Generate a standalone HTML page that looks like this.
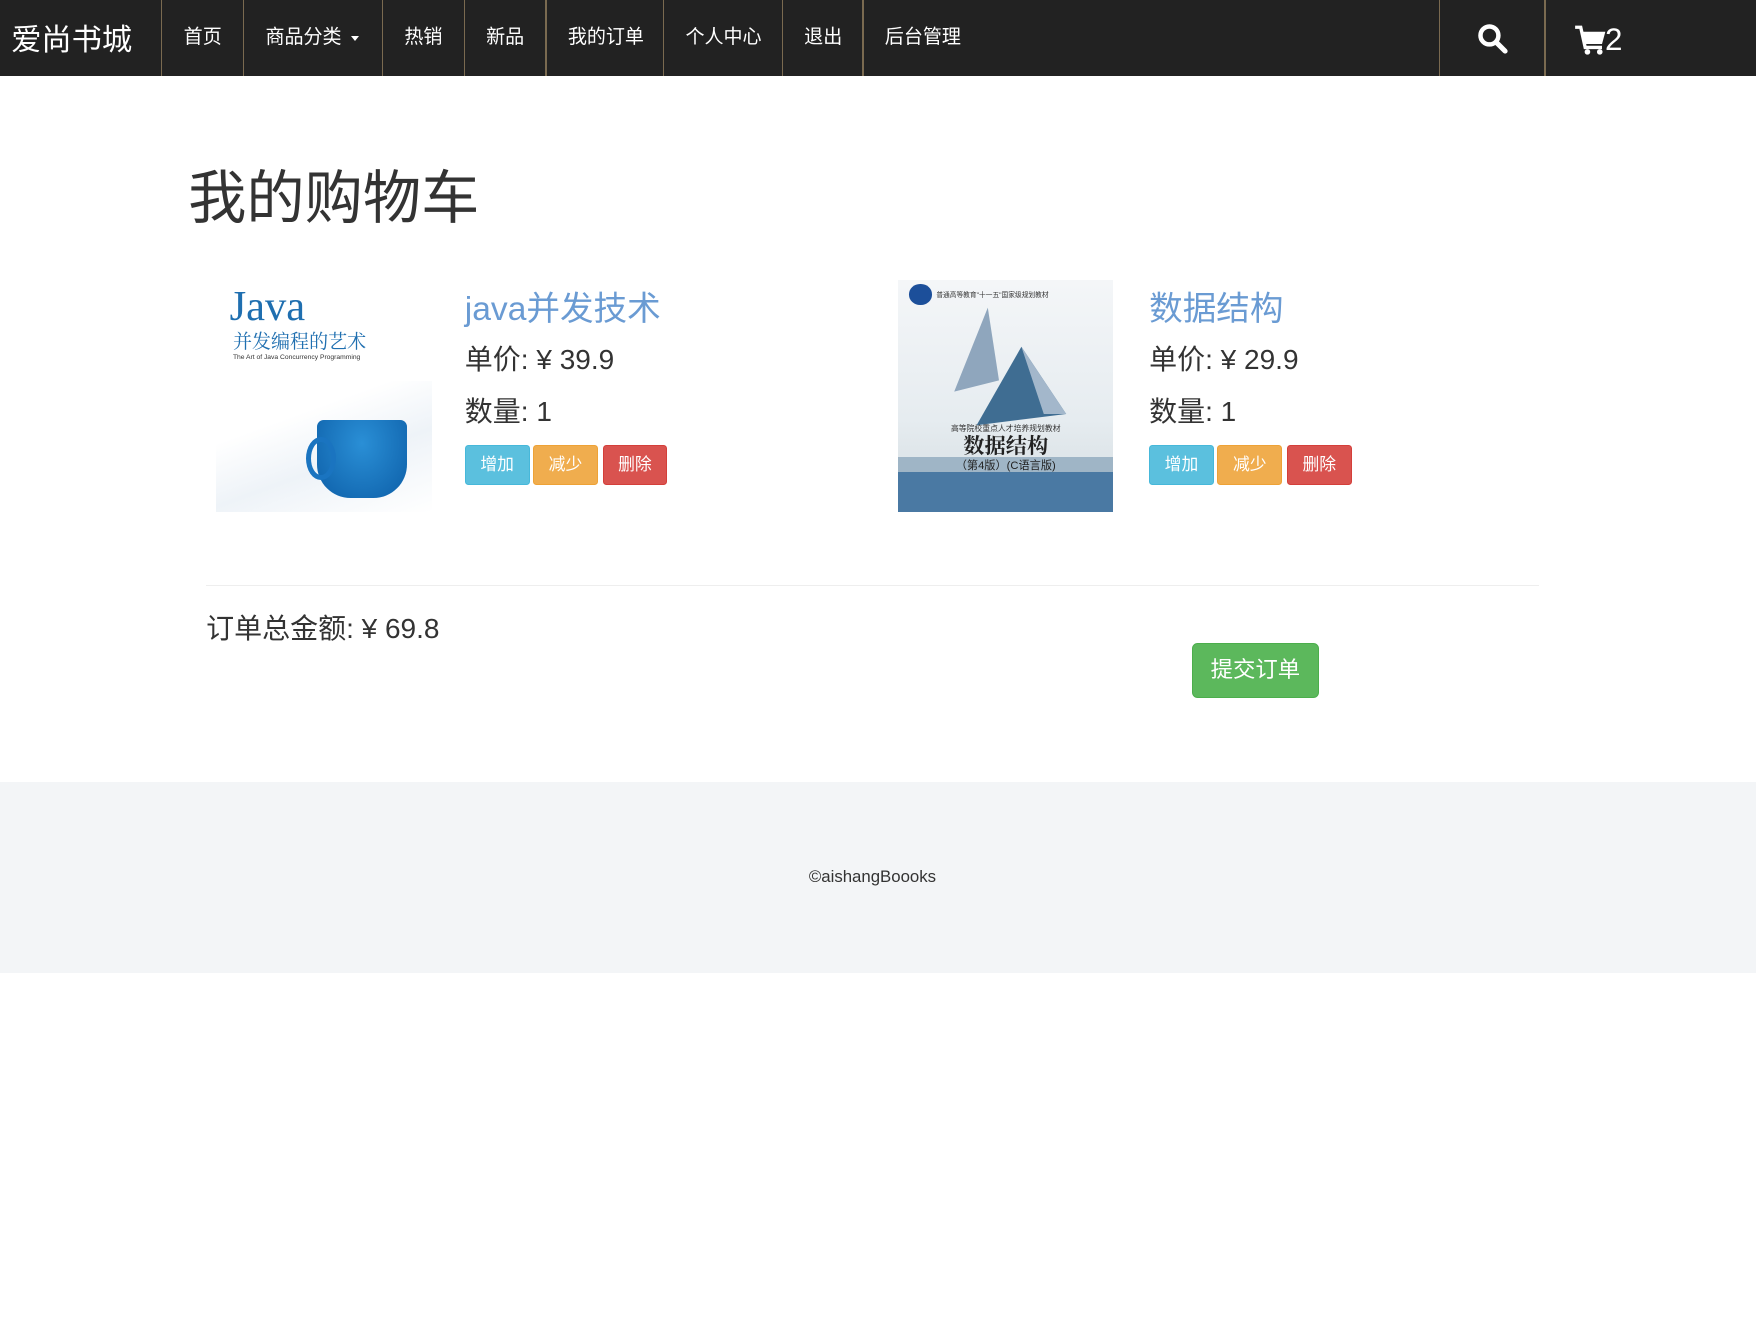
<!DOCTYPE html>
<html><head><meta charset="utf-8"><style>
html,body{margin:0;padding:0;background:#fff;}
body{zoom:1.12;width:1568px;height:1178px;position:relative;overflow:hidden;font-family:"Liberation Sans","Noto Sans CJK SC",sans-serif;color:#333;}
.nav{position:absolute;left:0;top:0;width:1568px;height:68px;background:#222;}
.brand{position:absolute;left:10px;top:13px;font-size:27px;color:#fff;}
.sep{position:absolute;top:0;width:1px;height:68px;background:#7a6a50;}
.ni{position:absolute;top:20px;font-size:17px;color:#fff;}
.a{position:absolute;}
h1{position:absolute;left:168px;top:134px;margin:0;font-size:52px;font-weight:400;color:#333;}
.t{position:absolute;font-size:30px;color:#6a9bd3;}
.p{position:absolute;font-size:25px;color:#333;}
.b{position:absolute;top:397px;height:34px;width:56px;border-radius:3px;color:#fff;font-size:15px;text-align:center;line-height:34px;}
.bi{background:#5bc0de;border:1px solid #46b8da;}
.bw{background:#f0ad4e;border:1px solid #eea236;}
.bd{background:#d9534f;border:1px solid #d43f3a;}
</style></head><body>
<div class="nav">
<div class="brand">爱尚书城</div>
<div class="sep" style="left:144px"></div><div class="sep" style="left:217px"></div><div class="sep" style="left:341px"></div><div class="sep" style="left:414px"></div><div class="sep" style="left:487px"></div><div class="sep" style="left:592px"></div><div class="sep" style="left:698px"></div><div class="sep" style="left:770px"></div><div class="sep" style="left:1285px"></div><div class="sep" style="left:1379px"></div>
<div class="ni" style="left:164px">首页</div>
<div class="ni" style="left:237px">商品分类 <span style="display:inline-block;border-left:4px solid transparent;border-right:4px solid transparent;border-top:5px solid #fff;vertical-align:middle;margin-left:4px"></span></div>
<div class="ni" style="left:361px">热销</div>
<div class="ni" style="left:434px">新品</div>
<div class="ni" style="left:507px">我的订单</div>
<div class="ni" style="left:612px">个人中心</div>
<div class="ni" style="left:718px">退出</div>
<div class="ni" style="left:790px">后台管理</div>
<svg class="a" style="left:1318px;top:20px" width="30" height="30" viewBox="0 0 30 30"><circle cx="12" cy="12" r="8" fill="none" stroke="#fff" stroke-width="4"/><line x1="18" y1="18" x2="26" y2="26" stroke="#fff" stroke-width="4.5" stroke-linecap="round"/></svg>
<svg class="a" style="left:1405px;top:22px" width="30" height="28" viewBox="0 0 30 28"><path d="M1 2h5l4 18h15" fill="none" stroke="#fff" stroke-width="3"/><path d="M7 6h21l-3 11H10z" fill="#fff"/><circle cx="12" cy="24" r="2.5" fill="#fff"/><circle cx="23" cy="24" r="2.5" fill="#fff"/></svg>
<div class="a" style="left:1433px;top:20px;font-size:28px;color:#fff">2</div>
</div>
<h1>我的购物车</h1>
<div class="a" style="left:193px;top:250px;width:193px;height:207px;background:#fff;overflow:hidden">
<div class="a" style="left:12px;top:2px;font-size:38px;color:#1f6fb0;font-family:'Liberation Serif',serif">Java</div>
<div class="a" style="left:15px;top:42px;font-size:17px;color:#1f6fb0;font-family:'Noto Serif CJK SC',serif">并发编程的艺术</div>
<div class="a" style="left:15px;top:66px;font-size:6px;color:#333">The Art of Java Concurrency Programming</div>
<div class="a" style="left:0;top:90px;width:193px;height:117px;background:linear-gradient(160deg,#fff 30%,#eef3f8 60%,#fff)"></div>
<div class="a" style="left:90px;top:125px;width:80px;height:70px;background:radial-gradient(ellipse at 50% 30%,#2a8fd6,#0d5fa8);border-radius:6px 6px 30px 30px"></div>
<div class="a" style="left:80px;top:140px;width:18px;height:30px;border:5px solid #1a74c0;border-radius:50%"></div>
</div>
<div class="t" style="left:415px;top:251px">java并发技术</div>
<div class="p" style="left:415px;top:302px">单价: ¥ 39.9</div>
<div class="p" style="left:415px;top:348px">数量: 1</div>
<div class="b bi" style="left:415px">增加</div><div class="b bw" style="left:476px">减少</div><div class="b bd" style="left:538px">删除</div>
<div class="a" style="left:802px;top:250px;width:192px;height:207px;background:linear-gradient(180deg,#f4f6f8,#e6ecf0 60%,#dfe6ea 75%);overflow:hidden">
<div class="a" style="left:10px;top:4px;width:20px;height:18px;border-radius:50%;background:#1c4f9a"></div>
<div class="a" style="left:34px;top:8px;font-size:6px;color:#333">普通高等教育"十一五"国家级规划教材</div>
<svg class="a" style="left:40px;top:20px" width="120" height="120" viewBox="0 0 120 120"><polygon points="40,5 10,80 50,70" fill="#8fa6bd"/><polygon points="70,40 30,110 110,100" fill="#3f6d92"/><polygon points="70,40 90,100 110,100" fill="#a3b7cb"/></svg>
<div class="a" style="left:0;top:128px;width:192px;text-align:center;font-size:7px;color:#333">高等院校重点人才培养规划教材</div>
<div class="a" style="left:0;top:134px;width:192px;text-align:center;font-size:19px;color:#222;font-family:'Noto Serif CJK SC',serif;font-weight:bold">数据结构</div>
<div class="a" style="left:0;top:158px;width:192px;height:13px;background:#9fb5c6;text-align:center;font-size:10px;color:#222">（第4版）(C语言版)</div>
<div class="a" style="left:0;top:171px;width:192px;height:36px;background:#4a79a3"></div>
</div>
<div class="t" style="left:1026px;top:251px">数据结构</div>
<div class="p" style="left:1026px;top:302px">单价: ¥ 29.9</div>
<div class="p" style="left:1026px;top:348px">数量: 1</div>
<div class="b bi" style="left:1026px">增加</div><div class="b bw" style="left:1087px">减少</div><div class="b bd" style="left:1149px">删除</div>
<div class="a" style="left:184px;top:522px;width:1190px;height:1px;background:#eee"></div>
<div class="p" style="left:184px;top:542px">订单总金额: ¥ 69.8</div>
<div class="a" style="left:1064px;top:574px;width:112px;height:47px;background:#5cb85c;border:1px solid #4cae4c;border-radius:5px;color:#fff;font-size:20px;text-align:center;line-height:47px">提交订单</div>
<div class="a" style="left:0;top:698px;width:1568px;height:171px;background:#f3f5f7"></div>
<div class="a" style="left:0;top:774px;width:1558px;text-align:center;font-size:15px;color:#333">©aishangBoooks</div>
</body></html>
